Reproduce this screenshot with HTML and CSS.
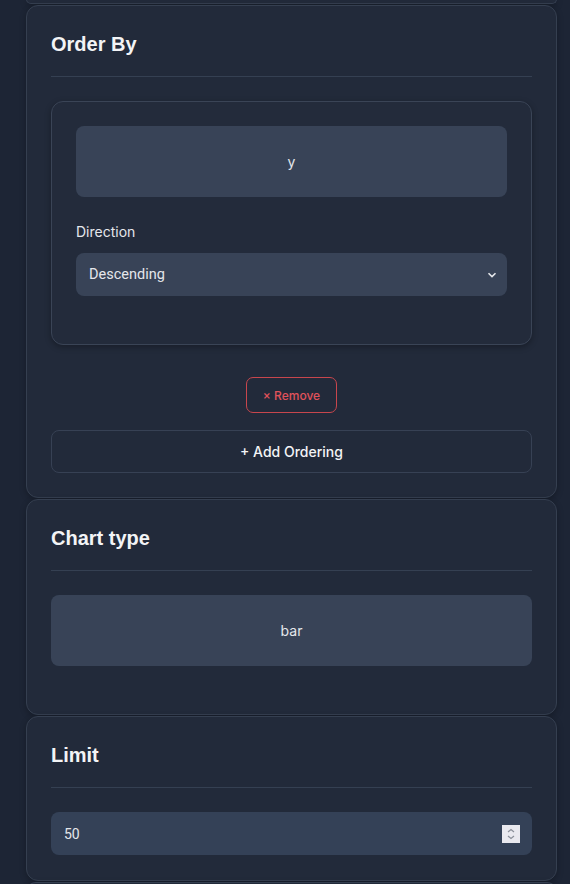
FILE: index.html
```html
<!DOCTYPE html>
<html>
<head>
<meta charset="utf-8">
<link rel="stylesheet" href="styles.css">
</head>
<body>
<div class="stack">
  <div class="card card-tail"></div>

  <section class="card">
    <h2 class="card-title">Order By</h2>
    <div class="inner-card">
      <div class="group">
        <div class="field field-tall">y</div>
      </div>
      <div class="group">
        <label class="label">Direction</label>
        <div class="field field-select">
          <span>Descending</span>
          <svg class="chev" width="10" height="6" viewBox="0 0 10 6"><path d="M1.5 1.2 L5 4.6 L8.5 1.2" fill="none" stroke="#e5e7eb" stroke-width="1.6"/></svg>
        </div>
      </div>
    </div>
    <div class="remove-row">
      <button class="btn-remove">× Remove</button>
    </div>
    <button class="btn-add">+ Add Ordering</button>
  </section>

  <section class="card">
    <h2 class="card-title">Chart type</h2>
    <div class="group">
      <div class="field field-tall">bar</div>
    </div>
  </section>

  <section class="card card-limit">
    <h2 class="card-title">Limit</h2>
    <div class="field field-number">
      <span>50</span>
      <span class="spinner">
        <svg width="18" height="18" viewBox="0 0 18 18"><path d="M6 7 L9 4.5 L12 7" fill="none" stroke="#8a8f99" stroke-width="1.2"/><path d="M6 11 L9 13.5 L12 11" fill="none" stroke="#8a8f99" stroke-width="1.2"/></svg>
      </span>
    </div>
  </section>

  <div class="card card-head"></div>
</div>
</body>
</html>
```

FILE: styles.css
```css
* { box-sizing: border-box; }

html, body {
  margin: 0;
  padding: 0;
  height: 884px;
  overflow: hidden;
}

body {
  background: #1d2535;
  font-family: Inter, "Liberation Sans", sans-serif;
  color: #e5e7eb;
}

.stack {
  display: flex;
  flex-direction: column;
  gap: 1px;
  width: 531px;
  margin-left: 26px;
}

.card {
  background: #222a3a;
  border: 1px solid #353f50;
  border-radius: 12px;
  padding: 24px;
  box-shadow: 0 2px 6px rgba(0, 0, 0, 0.25);
}

.card-tail {
  height: 5px;
  padding: 0;
  margin-top: -1px;
  border-top: none;
  border-radius: 0 0 12px 12px;
}

.card-head {
  height: 10px;
  padding: 0;
  border-bottom: none;
  border-radius: 12px 12px 0 0;
}

.card-limit {
  padding-bottom: 25px;
}

.card-title {
  margin: 0 0 24px 0;
  font-family: "Liberation Sans", Arial, sans-serif;
  font-weight: 700;
  font-size: 20px;
  line-height: 28px;
  color: #f3f4f6;
  padding-bottom: 18px;
  border-bottom: 1px solid #354052;
}

.inner-card {
  background: #232b3b;
  border: 1px solid #3a4456;
  border-radius: 12px;
  padding: 24px;
  box-shadow: 0 2px 6px rgba(0, 0, 0, 0.3);
}

.group {
  margin-bottom: 24px;
}

.label {
  display: block;
  font-size: 14px;
  line-height: 22px;
  margin-bottom: 10px;
  color: #e5e7eb;
}

.field {
  background: #384357;
  border-radius: 8px;
  font-size: 14px;
  color: #e5e7eb;
}

.field-tall {
  height: 71px;
  display: flex;
  align-items: center;
  justify-content: center;
}

.field-select {
  height: 43px;
  display: flex;
  align-items: center;
  justify-content: space-between;
  padding: 0 10px 0 13px;
  font-family: Roboto, Inter, sans-serif;
  font-size: 14.5px;
}

.chev {
  display: block;
}

.field-number {
  height: 43px;
  display: flex;
  align-items: center;
  justify-content: space-between;
  padding: 0 12px 0 13px;
  background: #344157;
  font-family: Roboto, Inter, sans-serif;
}

.spinner {
  width: 18px;
  height: 18px;
  background: #e9e9ef;
  display: flex;
}

.remove-row {
  display: flex;
  justify-content: center;
  margin-top: 32px;
  margin-bottom: 17px;
}

.btn-remove {
  background: transparent;
  border: 1px solid #c8464d;
  color: #e0525a;
  border-radius: 7px;
  height: 36px;
  width: 91px;
  font-family: Inter, sans-serif;
  font-size: 12px;
  font-weight: 500;
  padding: 0;
}

.btn-add {
  display: block;
  width: 100%;
  height: 43px;
  background: transparent;
  border: 1px solid #374154;
  border-radius: 8px;
  color: #f3f4f6;
  font-family: Inter, sans-serif;
  font-size: 14px;
  font-weight: 500;
  padding: 0;
}
```
